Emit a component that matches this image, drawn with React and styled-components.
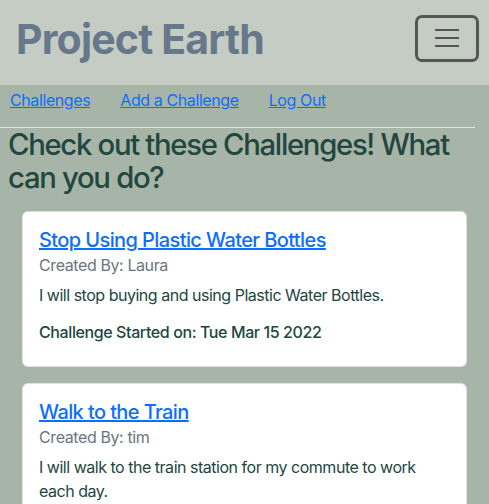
import React from 'react';
import styled, { createGlobalStyle } from 'styled-components';

const GlobalStyle = createGlobalStyle`
  body {
    margin: 0;
    background: #a7b5a8;
    font-family: Inter, 'Noto Sans', sans-serif;
    font-size: 16px;
    line-height: 1.5;
    letter-spacing: -0.025em;
    color: #23463f;
  }
`;

const Header = styled.header`
  height: 85px;
  background: #c5ccc4;
  display: flex;
  align-items: center;
  justify-content: space-between;
  padding: 0 10px 0 16px;
  box-sizing: border-box;
`;

const Brand = styled.div`
  font-size: 41px;
  font-weight: 700;
  letter-spacing: -0.02em;
  color: #66788a;
  line-height: 1;
  margin-top: -6px;
`;

const Toggler = styled.button`
  width: 64px;
  height: 47px;
  margin-top: -9px;
  border: 3px solid #545654;
  border-radius: 7px;
  background: transparent;
  display: flex;
  flex-direction: column;
  align-items: center;
  justify-content: center;
  gap: 6px;
  padding: 0;
`;

const Bar = styled.span`
  display: block;
  width: 24px;
  height: 2px;
  background: #545654;
`;

const Nav = styled.nav`
  display: flex;
  gap: 30px;
  padding: 3px 10px 0;
`;

const NavLink = styled.a`
  color: #0d6efd;
  text-decoration: underline;
`;

const Rule = styled.hr`
  margin: 15px 14px 0 0;
  border: 0;
  border-top: 1px solid #dfe5df;
`;

const Heading = styled.h1`
  font-size: 29.3px;
  font-weight: 500;
  line-height: 1.13;
  letter-spacing: -0.045em;
  margin: 0 0 17px;
  padding: 0 8px;
  color: #23463f;
`;

const CardList = styled.div`
  display: flex;
  flex-direction: column;
  gap: 16px;
  padding: 0 22px;
`;

const Card = styled.div`
  background: #fff;
  border: 1px solid rgba(0, 0, 0, 0.12);
  border-radius: 6px;
  padding: 16px;
`;

const CardTitle = styled.a`
  display: block;
  font-size: 20px;
  font-weight: 500;
  line-height: 1.2;
  letter-spacing: -0.03em;
  color: #0d6efd;
  text-decoration: underline;
  margin-bottom: 4px;
`;

const Subtitle = styled.div`
  color: #6c757d;
  line-height: 1.2;
  margin-bottom: 8px;
`;

const Text = styled.p`
  margin: 0 0 16px;
  letter-spacing: -0.03em;
`;

const Started = styled.div`
  font-weight: 500;
  line-height: 1.2;
  margin-bottom: 7px;
`;

const challenges = [
  {
    title: 'Stop Using Plastic Water Bottles',
    author: 'Laura',
    text: 'I will stop buying and using Plastic Water Bottles.',
    started: 'Tue Mar 15 2022',
  },
  {
    title: 'Walk to the Train',
    author: 'tim',
    text: 'I will walk to the train station for my commute to work each day.',
    started: 'Wed Mar 16 2022',
  },
];

const App = () => (
  <>
    <GlobalStyle />
    <Header>
      <Brand>Project Earth</Brand>
      <Toggler aria-label="Toggle navigation">
        <Bar />
        <Bar />
        <Bar />
      </Toggler>
    </Header>
    <Nav>
      <NavLink href="#">Challenges</NavLink>
      <NavLink href="#">Add a Challenge</NavLink>
      <NavLink href="#">Log Out</NavLink>
    </Nav>
    <Rule />
    <Heading>Check out these Challenges! What can you do?</Heading>
    <CardList>
      {challenges.map((c) => (
        <Card key={c.title}>
          <CardTitle href="#">{c.title}</CardTitle>
          <Subtitle>Created By: {c.author}</Subtitle>
          <Text>{c.text}</Text>
          <Started>Challenge Started on: {c.started}</Started>
        </Card>
      ))}
    </CardList>
  </>
);

export default App;
